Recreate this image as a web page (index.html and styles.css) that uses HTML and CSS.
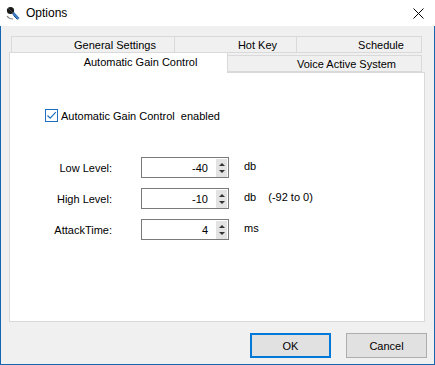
FILE: index.html
```html
<!DOCTYPE html>
<html>
<head>
<meta charset="utf-8">
<link rel="stylesheet" href="styles.css">
</head>
<body>
<div class="window">
  <div class="titlebar">
    <svg class="app-icon" width="16" height="16" viewBox="0 0 16 16">
      <path d="M7 9 L13 14.5 L14.5 13 L9 7 Z" fill="#3a7bbf"/>
      <path d="M8.5 10.5 L12.5 14.5" stroke="#1d4f86" stroke-width="1"/>
      <circle cx="5.5" cy="5.5" r="3.6" fill="#1a1a1a"/>
      <path d="M3 3 L8 8" stroke="#555" stroke-width="0.8"/>
      <path d="M2 11 Q4 14 8 14" stroke="#8a8a8a" stroke-width="1.2" fill="none"/>
    </svg>
    <span class="title">Options</span>
    <svg class="close" width="11" height="11" viewBox="0 0 11 11">
      <path d="M0.5 0.5 L10.5 10.5 M10.5 0.5 L0.5 10.5" stroke="#000" stroke-width="1"/>
    </svg>
  </div>
  <div class="body">
    <div class="tabs">
      <div class="tab-row back">
        <div class="tab t-general">General Settings</div>
        <div class="tab t-hotkey">Hot Key</div>
        <div class="tab t-schedule">Schedule</div>
      </div>
      <div class="tab-row front">
        <div class="tab t-agc selected">Automatic Gain Control</div>
        <div class="tab t-vas">Voice Active System</div>
      </div>
      <div class="panel">
        <label class="check">
          <span class="box">
            <svg width="11" height="11" viewBox="0 0 11 11"><path d="M1.5 5.5 L4.2 8.2 L9.8 2.2" stroke="#1e6fc0" stroke-width="1.2" fill="none"/></svg>
          </span>
          <span>Automatic Gain Control&nbsp; enabled</span>
        </label>
        <div class="form">
          <div class="lbl">Low Level:</div>
          <div class="spin"><span class="val">-40</span><span class="arrows"><i class="up"></i><i class="down"></i></span></div>
          <div class="unit">db</div>

          <div class="lbl">High Level:</div>
          <div class="spin"><span class="val">-10</span><span class="arrows"><i class="up"></i><i class="down"></i></span></div>
          <div class="unit">db<span class="range">(-92 to 0)</span></div>

          <div class="lbl">AttackTime:</div>
          <div class="spin"><span class="val">4</span><span class="arrows"><i class="up"></i><i class="down"></i></span></div>
          <div class="unit">ms</div>
        </div>
      </div>
    </div>
    <div class="buttons">
      <div class="btn default">OK</div>
      <div class="btn">Cancel</div>
    </div>
  </div>
</div>
</body>
</html>
```
FILE: styles.css
```css
* { box-sizing: border-box; }
html, body { margin: 0; padding: 0; }
body {
  width: 435px;
  height: 365px;
  font-family: "Liberation Sans", Arial, sans-serif;
  font-size: 11px;
  color: #000;
  overflow: hidden;
}
.window {
  width: 435px;
  height: 365px;
  border: 1px solid #1565b0;
  border-top: none;
  background: #f0f0f0;
  display: flex;
  flex-direction: column;
}
.titlebar {
  height: 26px;
  background: #fff;
  display: flex;
  align-items: center;
  margin: 0 -1px;
  padding-left: 5px;
  padding-right: 11px;
}
.title {
  font-size: 12px;
  margin-left: 5px;
  flex: 1;
  margin-top: -1px;
}
.close { margin-top: 1px; }

.body {
  flex: 1;
  padding: 10px 7px 0 8px;
  display: flex;
  flex-direction: column;
}
.tabs { margin-right: 2px; }
.tab-row { display: flex; }
.tab {
  display: flex;
  align-items: center;
  justify-content: center;
  padding-left: 44px;
  border: 1px solid #d9d9d9;
  background: #f0f0f0;
  white-space: nowrap;
}
.back {
  margin: 0 2px;
  height: 17px;
}
.back .tab { height: 17px; padding-top: 1px; }
.t-general { width: 164px; }
.t-hotkey { width: 123px; margin-left: -1px; }
.t-schedule { width: 126px; margin-left: -1px; }
.front {
  margin-top: -1px;
  height: 20px;
  align-items: flex-end;
  margin-right: 2px;
}
.t-agc {
  width: 219px;
  height: 21px;
  margin-bottom: -1px;
  background: #fff;
  border-bottom: none;
  position: relative;
  z-index: 1;
  padding-bottom: 2px;
}
.t-vas {
  width: 195px;
  height: 17px;
  margin-left: -1px;
  padding-top: 1px;
}
.panel {
  height: 250px;
  background: #fff;
  border: 1px solid #d9d9d9;
  padding: 36px 0 0 35px;
}
.check {
  display: flex;
  align-items: center;
  gap: 3px;
}
.box {
  width: 13px;
  height: 13px;
  border: 1px solid #1e6fc0;
  background: #fff;
  display: flex;
  align-items: center;
  justify-content: center;
}
.form {
  margin-top: 35px;
  display: grid;
  grid-template-columns: 67px 88px auto;
  column-gap: 29px;
  row-gap: 10px;
  align-items: center;
}
.form .unit { margin-left: -14px; margin-top: -3px; }
.form .range { margin-left: 12px; }
.lbl { text-align: right; padding-right: 0; }
.spin {
  height: 21px;
  border: 1px solid #7a7a7a;
  display: flex;
  justify-content: flex-end;
  align-items: stretch;
  padding: 1px 1px 0 0;
}
.val {
  align-self: center;
  padding-right: 8px;
  margin-top: -1px;
}
.arrows {
  width: 11px;
  background: #e3e3e3;
  display: flex;
  flex-direction: column;
  align-items: center;
  justify-content: center;
  gap: 4px;
}
.arrows i {
  display: block;
  width: 0;
  height: 0;
  border-left: 3px solid transparent;
  border-right: 3px solid transparent;
}
.arrows .up { border-bottom: 3px solid #333; }
.arrows .down { border-top: 3px solid #333; }

.buttons {
  margin-top: 11px;
  display: flex;
  justify-content: flex-end;
  gap: 15px;
}
.btn {
  width: 81px;
  height: 25px;
  background: #e1e1e1;
  border: 1px solid #adadad;
  display: flex;
  align-items: center;
  justify-content: center;
}
.btn.default { border: 2px solid #0078d7; }
```
